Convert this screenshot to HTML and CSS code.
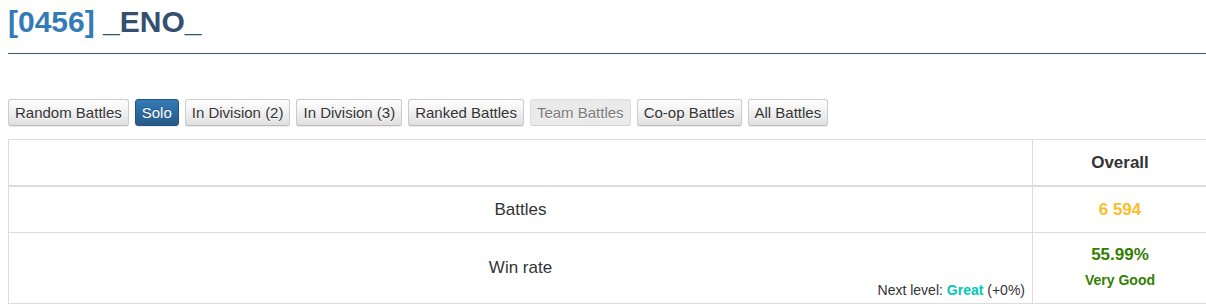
FILE: index.html
```html
<!DOCTYPE html>
<html lang="en">
<head>
    <meta charset="UTF-8">
    <meta name="viewport" content="width=device-width, initial-scale=1.0">
    <title>[0456] _ENO_</title>
    <link rel="stylesheet" href="styles.css">
</head>
<body>
    <div class="page">
        <h2 class="page-header"><span class="clan">[0456]</span> _ENO_</h2>

        <div class="modes">
            <button class="btn">Random Battles</button>
            <button class="btn active">Solo</button>
            <button class="btn">In Division (2)</button>
            <button class="btn">In Division (3)</button>
            <button class="btn">Ranked Battles</button>
            <button class="btn disabled">Team Battles</button>
            <button class="btn">Co-op Battles</button>
            <button class="btn">All Battles</button>
        </div>

        <div class="stats">
            <div class="cell head"></div>
            <div class="cell head">Overall</div>

            <div class="cell label">Battles</div>
            <div class="cell value"><span class="average">6&nbsp;594</span></div>

            <div class="cell label winrate">
                <span class="name">Win rate</span>
                <div class="next">Next level: <b class="great">Great</b> (+0%)</div>
            </div>
            <div class="cell value">
                <span class="very-good big">55.99%</span>
                <span class="very-good small">Very Good</span>
            </div>
        </div>
    </div>
</body>
</html>
```

FILE: styles.css
```css
* {
    margin: 0;
    padding: 0;
    box-sizing: border-box;
}

html {
    overflow: hidden;
}

body {
    font-family: "Liberation Sans", Arial, Helvetica, sans-serif;
    font-size: 14px;
    color: #333;
    background-color: #fff;
    padding: 0 8px;
}

.page {
    width: 1200px;
}

.page-header {
    font-size: 30px;
    font-weight: bold;
    line-height: 33px;
    color: #34506e;
    padding: 5px 0 15px;
    border-bottom: 1px solid #3d5874;
}

.clan {
    color: #337ab7;
}

/* battle type buttons */
.modes {
    display: flex;
    gap: 6px;
    margin-top: 45px;
}

.btn {
    font-family: inherit;
    font-size: 15px;
    line-height: 17px;
    padding: 4px 6px;
    color: #333;
    border: 1px solid #ccc;
    border-bottom-color: #bbb;
    border-radius: 3px;
    background-image: linear-gradient(to bottom, #fff 0, #e0e0e0 100%);
    text-shadow: 0 1px 0 #fff;
    box-shadow: 0 1px 1px rgba(0, 0, 0, 0.075);
    cursor: pointer;
}

.btn.active {
    color: #fff;
    border-color: #245580;
    background-image: linear-gradient(to bottom, #337ab7 0, #265a88 100%);
    text-shadow: 0 -1px 0 rgba(0, 0, 0, 0.2);
}

.btn.disabled {
    background-image: none;
    background-color: #e0e0e0;
    opacity: 0.65;
    box-shadow: none;
    cursor: default;
}

/* stats table */
.stats {
    display: grid;
    grid-template-columns: 1024px 175px;
    grid-template-rows: 47px 46px 71px;
    margin-top: 13px;
    border-top: 1px solid #ddd;
    border-left: 1px solid #ddd;
}

.cell {
    display: flex;
    flex-direction: column;
    align-items: center;
    justify-content: center;
    border-right: 1px solid #ddd;
    border-bottom: 1px solid #ddd;
    font-size: 17px;
}

.cell.head {
    border-bottom-width: 2px;
    font-weight: bold;
}

.value {
    font-weight: bold;
}

.average {
    color: #fcbd2b;
}

.very-good {
    color: #318000;
}

.very-good.big {
    line-height: 24px;
}

.very-good.small {
    font-size: 14px;
    line-height: 26px;
}

.cell.winrate {
    display: grid;
    grid-template-columns: 100%;
    grid-template-rows: 1fr auto 1fr;
    justify-content: stretch;
    justify-items: center;
}

.winrate .name {
    grid-row: 2;
    line-height: 24px;
}

.winrate .next {
    grid-row: 3;
    align-self: end;
    justify-self: end;
    font-size: 14px;
    line-height: 20px;
    padding: 0 7px 3px 0;
}

.great {
    color: #02c9b3;
}
```
